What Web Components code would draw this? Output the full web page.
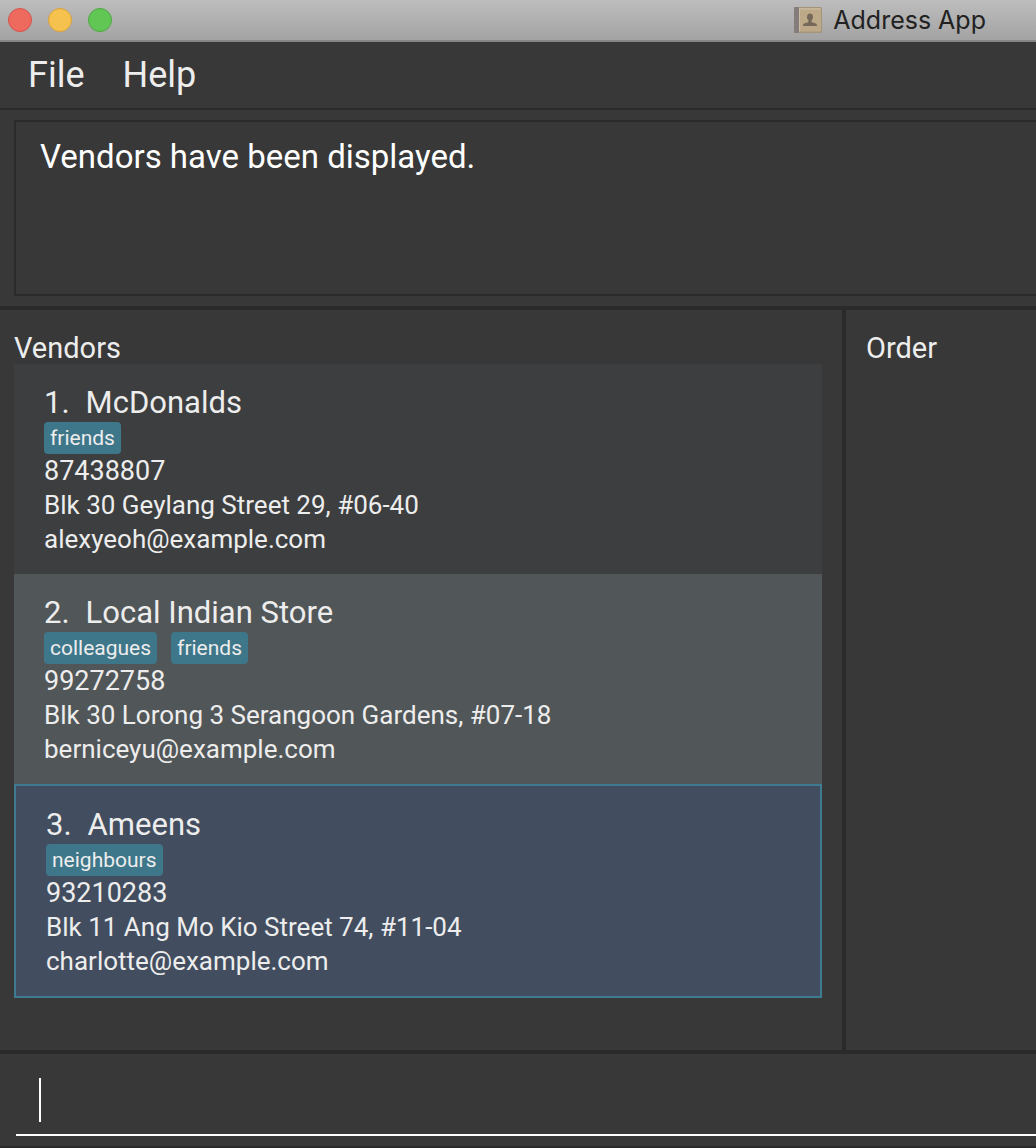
<!DOCTYPE html>
<html lang="en">
<head>
<meta charset="utf-8">
<meta name="viewport" content="width=device-width, initial-scale=1">
<title>Address App</title>
<style>
  html, body { height: 100%; margin: 0; }
  body { background: #383838; color: #ededed; font-family: Roboto, "Liberation Sans", sans-serif; }
</style>
</head>
<body>
<address-app></address-app>

<template id="tpl-app">
  <style>
    :host { display: flex; flex-direction: column; min-height: 100%; box-sizing: border-box; border-bottom: 2px solid #2a2a2a; }
    split-pane { flex: 1; }
  </style>
  <title-bar>Address App</title-bar>
  <menu-bar>
    <menu-button>File</menu-button>
    <menu-button>Help</menu-button>
  </menu-bar>
  <result-display message="Vendors have been displayed."></result-display>
  <split-pane>
    <list-panel slot="main" heading="Vendors">
      <vendor-card index="1" name="McDonalds" phone="87438807" address="Blk 30 Geylang Street 29, #06-40" email="alexyeoh@example.com">
        <tag-label slot="tags">friends</tag-label>
      </vendor-card>
      <vendor-card index="2" name="Local Indian Store" phone="99272758" address="Blk 30 Lorong 3 Serangoon Gardens, #07-18" email="berniceyu@example.com">
        <tag-label slot="tags">colleagues</tag-label>
        <tag-label slot="tags">friends</tag-label>
      </vendor-card>
      <vendor-card selected index="3" name="Ameens" phone="93210283" address="Blk 11 Ang Mo Kio Street 74, #11-04" email="charlotte@example.com">
        <tag-label slot="tags">neighbours</tag-label>
      </vendor-card>
    </list-panel>
    <list-panel slot="side" heading="Order"></list-panel>
  </split-pane>
  <command-box></command-box>
</template>

<template id="tpl-title">
  <style>
    :host { display: flex; align-items: center; justify-content: space-between; height: 42px; box-sizing: border-box; padding: 0 50px 0 8px;
      background: linear-gradient(#bdbdbd, #a3a3a3); border-bottom: 2px solid #858585; color: #222; }
    .lights { display: flex; gap: 16px; }
    button { width: 24px; height: 24px; padding: 0; border-radius: 50%; border: 1px solid; box-sizing: border-box; }
    .close { background: #ee6a5f; border-color: #d5534a; }
    .min { background: #f5c250; border-color: #d9a13c; }
    .zoom { background: #62c655; border-color: #4fa93f; }
    h1 { display: flex; align-items: center; gap: 11px; margin: 0; font-family: Inter, "Liberation Sans", sans-serif; font-size: 25px; line-height: 32px; font-weight: 400; }
    svg { display: block; }
  </style>
  <div class="lights">
    <button class="close" aria-label="Close"></button>
    <button class="min" aria-label="Minimise"></button>
    <button class="zoom" aria-label="Zoom"></button>
  </div>
  <h1>
    <svg width="28" height="28" viewBox="0 0 28 28" aria-hidden="true">
      <rect x="0" y="1" width="28" height="26" rx="1.5" fill="#a3947a"/>
      <rect x="0" y="1" width="5" height="26" rx="1" fill="#857d7b"/>
      <rect x="5" y="2" width="22" height="23.5" rx="1" fill="#bda988"/>
      <path d="M5.500 3H26.500" stroke="#cec0a6" stroke-width="1"/>
      <path d="M5.500 2V25.500" stroke="#c9bda7" stroke-width="1"/>
      <path d="M16 7.500c-2 0-3 1.400-3 3.200 0 1.700.6 2.800 1.400 3.600v1.500c0 1-5.400 1.200-5.400 3.400v.8h14v-.8c0-2.200-5.400-2.400-5.400-3.400v-1.500c.8-.8 1.400-1.900 1.400-3.600 0-1.800-1-3.200-3-3.200z" fill="#76695a"/>
    </svg>
    <slot></slot>
  </h1>
</template>

<template id="tpl-menubar">
  <style>
    :host { display: block; border-bottom: 2px solid #2a2a2a; }
    nav { display: flex; gap: 6px; height: 66px; padding: 0 12px; align-items: center; }
  </style>
  <nav aria-label="Main menu"><slot></slot></nav>
</template>

<template id="tpl-menubutton">
  <style>
    :host { display: block; }
    button { font: inherit; font-size: 36px; line-height: 44px; color: inherit; background: none; border: 0; padding: 0 16px; }
  </style>
  <button type="button"><slot></slot></button>
</template>

<template id="tpl-result">
  <style>
    :host { display: block; padding: 10px 0 10px 14px; border-bottom: 4px solid #2a2a2a; }
    textarea { display: block; width: 100%; height: 176px; box-sizing: border-box; margin: 0; padding: 14px 24px; resize: none; outline: 0;
      border: 2px solid #2a2a2a; border-right: 0; border-radius: 0; background: transparent; color: #fff;
      font-family: inherit; font-size: 33px; line-height: 42px; }
  </style>
  <textarea readonly aria-label="Result"></textarea>
</template>

<template id="tpl-split">
  <style>
    :host { display: grid; grid-template-columns: minmax(0, 1fr) 194px; }
    .main { padding: 22px 20px 16px 14px; }
    .side { padding: 22px 20px 16px 20px; border-left: 4px solid #2a2a2a; }
  </style>
  <div class="main"><slot name="main"></slot></div>
  <div class="side"><slot name="side"></slot></div>
</template>

<template id="tpl-list">
  <style>
    :host { display: block; }
    h2 { margin: 0; font-size: 29px; line-height: 32px; font-weight: 400; }
    ::slotted(:nth-child(odd)) { background: #3c3e3f; }
    ::slotted(:nth-child(even)) { background: #515658; }
    ::slotted([selected]) { background: #424d5f; border: 2px solid #3e7b91; }
  </style>
  <section><h2></h2><slot></slot></section>
</template>

<template id="tpl-card">
  <style>
    :host { display: block; }
    article { padding: 20px 30px 18px; }
    h3 { display: flex; gap: 16px; margin: 0; font-size: 31px; line-height: 38px; font-weight: 400; }
    .tags { display: flex; flex-wrap: wrap; gap: 14px; }
    p { margin: 0; font-size: 26px; line-height: 34px; }
    .phone { font-size: 27px; }
  </style>
  <article>
    <h3><span class="index"></span><span class="name"></span></h3>
    <div class="tags"><slot name="tags"></slot></div>
    <p class="phone"></p>
    <p class="address"></p>
    <p class="email"></p>
  </article>
</template>

<template id="tpl-tag">
  <style>
    :host { display: block; padding: 0 6px; border-radius: 4px; background: #3e768a; font-size: 21px; line-height: 32px; }
  </style>
  <slot></slot>
</template>

<template id="tpl-command">
  <style>
    :host { display: block; padding: 10px 0 10px 16px; border-top: 4px solid #2a2a2a; }
    label { display: flex; align-items: center; height: 70px; padding: 0 0 0 23px; border-bottom: 2px solid #fff; }
    .caret { width: 2px; height: 44px; margin-bottom: -2px; background: #fff; }
    input { flex: 1; min-width: 0; height: 44px; padding: 0; border: 0; outline: 0; background: none; color: #fff; font: inherit; font-size: 33px; caret-color: transparent; }
  </style>
  <label><span class="caret"></span><input type="text" aria-label="Command"></label>
</template>

<script>
  class Templated extends HTMLElement {
    constructor() {
      super();
      const tpl = document.getElementById(this.constructor.template);
      this.attachShadow({ mode: "open" }).append(tpl.content.cloneNode(true));
    }
    fill(selector, text) { this.shadowRoot.querySelector(selector).textContent = text; }
  }
  class TitleBar extends Templated { static template = "tpl-title"; }
  class MenuBar extends Templated { static template = "tpl-menubar"; }
  class MenuButton extends Templated { static template = "tpl-menubutton"; }
  class ResultDisplay extends Templated {
    static template = "tpl-result";
    connectedCallback() { this.shadowRoot.querySelector("textarea").value = this.getAttribute("message"); }
  }
  class SplitPane extends Templated { static template = "tpl-split"; }
  class ListPanel extends Templated {
    static template = "tpl-list";
    connectedCallback() { this.fill("h2", this.getAttribute("heading")); }
  }
  class VendorCard extends Templated {
    static template = "tpl-card";
    connectedCallback() {
      this.fill(".index", this.getAttribute("index") + ".");
      for (const key of ["name", "phone", "address", "email"]) this.fill("." + key, this.getAttribute(key));
    }
  }
  class TagLabel extends Templated { static template = "tpl-tag"; }
  class CommandBox extends Templated { static template = "tpl-command"; }
  class AddressApp extends Templated { static template = "tpl-app"; }

  customElements.define("title-bar", TitleBar);
  customElements.define("menu-bar", MenuBar);
  customElements.define("menu-button", MenuButton);
  customElements.define("result-display", ResultDisplay);
  customElements.define("split-pane", SplitPane);
  customElements.define("list-panel", ListPanel);
  customElements.define("vendor-card", VendorCard);
  customElements.define("tag-label", TagLabel);
  customElements.define("command-box", CommandBox);
  customElements.define("address-app", AddressApp);
</script>
</body>
</html>
